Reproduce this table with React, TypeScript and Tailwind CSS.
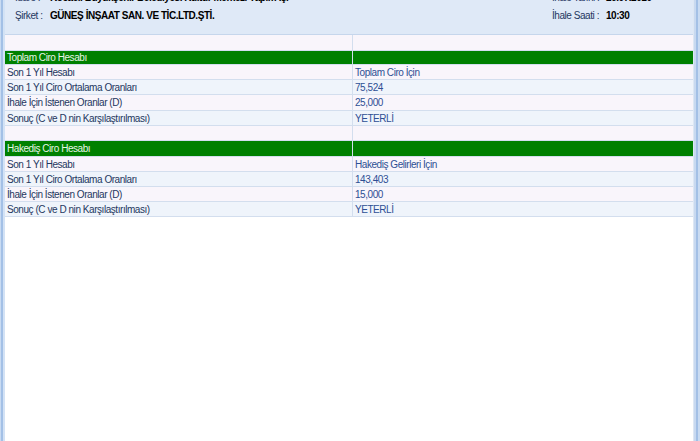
import React from "react";

type Row = { a: string; b: string; kind: "empty" | "group" | "data"; h: string };

const rows: Row[] = [
  { a: "", b: "", kind: "empty", h: "h-[16px]" },
  { a: "Toplam Ciro Hesabı", b: "", kind: "group", h: "h-[14px]" },
  { a: "Son 1 Yıl Hesabı", b: "Toplam Ciro İçin", kind: "data", h: "h-[15px]" },
  { a: "Son 1 Yıl Ciro Ortalama Oranları", b: "75,524", kind: "data", h: "h-[15px]" },
  { a: "İhale İçin İstenen Oranlar (D)", b: "25,000", kind: "data", h: "h-[16px]" },
  { a: "Sonuç (C ve D nin Karşılaştırılması)", b: "YETERLİ", kind: "data", h: "h-[15px]" },
  { a: "", b: "", kind: "empty", h: "h-[15px]" },
  { a: "Hakediş Ciro Hesabı", b: "", kind: "group", h: "h-[16px]" },
  { a: "Son 1 Yıl Hesabı", b: "Hakediş Gelirleri İçin", kind: "data", h: "h-[15px]" },
  { a: "Son 1 Yıl Ciro Ortalama Oranları", b: "143,403", kind: "data", h: "h-[15px]" },
  { a: "İhale İçin İstenen Oranlar (D)", b: "15,000", kind: "data", h: "h-[15px]" },
  { a: "Sonuç (C ve D nin Karşılaştırılması)", b: "YETERLİ", kind: "data", h: "h-[15px]" },
];

export default function App() {
  return (
    <div
      className="w-[700px] h-[441px] overflow-hidden flex bg-white text-[10px] tracking-[-0.45px] whitespace-nowrap"
      style={{ fontFamily: "'Liberation Sans', Arial, sans-serif" }}
    >
      <div className="w-[5px] h-full flex shrink-0">
        <div className="w-px bg-[#c9dbf2]" />
        <div className="w-[2px] bg-[#a3c0e6]" />
        <div className="w-[2px] bg-[#d3e2f5]" />
      </div>
      <div className="flex-1 flex flex-col min-w-0">
        <div className="h-[35px] bg-[#dfe9f7] flex flex-col border-b border-[#c6d6ec] overflow-hidden shrink-0">
          <div className="-mt-[11px] flex h-[16px] items-center shrink-0">
            <div className="flex items-center pl-[10px] w-[547px]">
              <span className="w-[35px] text-[#1e3760]">İdare :</span>
              <span className="font-bold text-black">Kocaeli Büyükşehir Belediyesi Kültür Merkezi Yapım İşi</span>
            </div>
            <span className="text-[#1e3760] w-[54px]">İhale Tarihi :</span>
            <span className="font-bold text-black">26.07.2010</span>
          </div>
          <div className="mt-[2px] flex h-[16px] items-center shrink-0">
            <div className="flex items-center pl-[10px] w-[547px]">
              <span className="w-[35px] text-[#1e3760]">Şirket :</span>
              <span className="font-bold text-black">GÜNEŞ İNŞAAT SAN. VE TİC.LTD.ŞTİ.</span>
            </div>
            <span className="text-[#1e3760] w-[54px]">İhale Saati :</span>
            <span className="font-bold text-black">10:30</span>
          </div>
        </div>
        <div className="flex-1 flex flex-col bg-white">
          {rows.map((r, i) => {
            const bg =
              r.kind === "group"
                ? "bg-[#008000]"
                : i % 2 === 0
                ? "bg-[#f9f5fb]"
                : "bg-[#eff4fb]";
            return (
              <div
                key={i}
                className={`flex shrink-0 ${r.h} border-b border-[#d3deee] ${bg}`}
              >
                <div
                  className={`w-[348px] pl-[2px] flex items-center border-r border-[#d3deee] ${
                    r.kind === "group" ? "text-[#e6f4e6]" : "text-[#1e3760]"
                  }`}
                >
                  {r.a}
                </div>
                <div className="w-[340px] pl-[2px] flex items-center text-[#2d4f94]">{r.b}</div>
              </div>
            );
          })}
        </div>
      </div>
      <div className="w-[7px] h-full flex shrink-0">
        <div className="w-px bg-[#dde7f4]" />
        <div className="w-[2px] bg-[#c8d9f0]" />
        <div className="w-[2px] bg-[#a3c0e6]" />
        <div className="w-[2px] bg-[#c9dbf2]" />
      </div>
    </div>
  );
}
